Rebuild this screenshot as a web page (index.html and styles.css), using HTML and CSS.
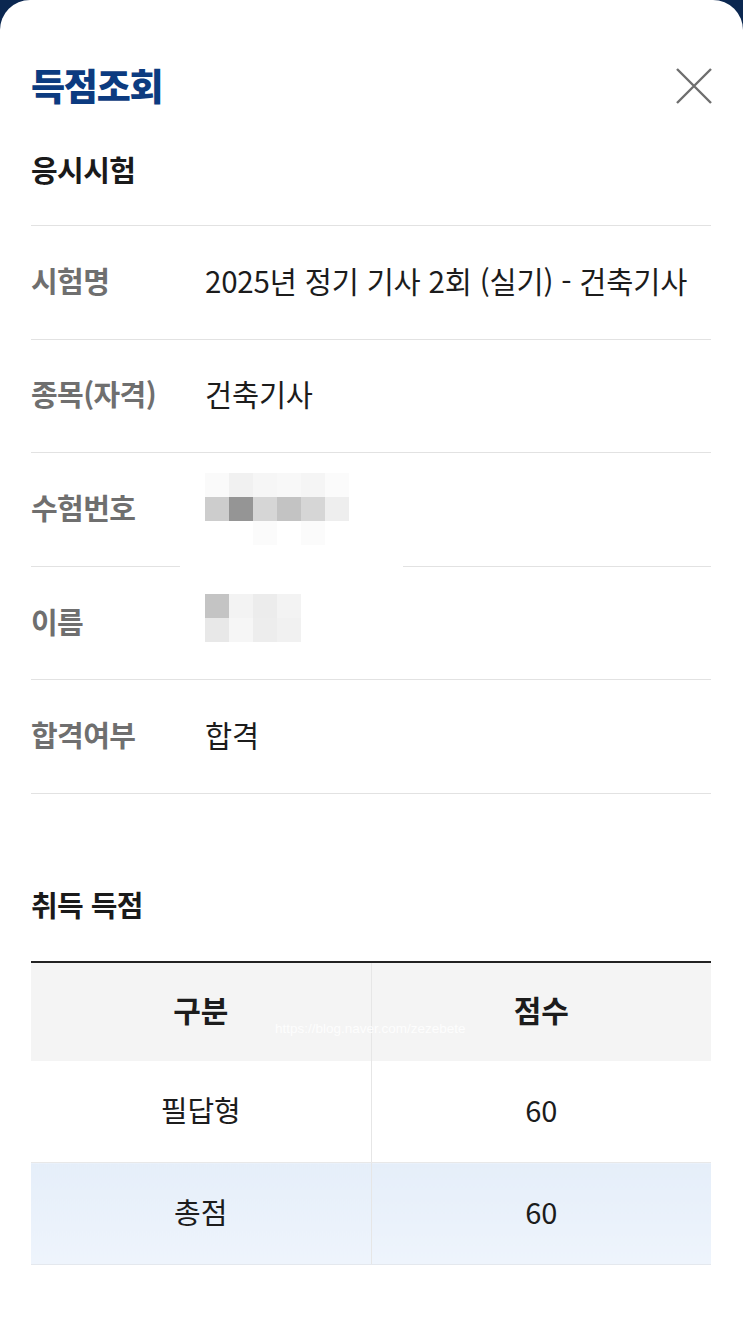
FILE: index.html
```html
<!DOCTYPE html>
<html lang="ko">
<head>
<meta charset="utf-8">
<title>득점조회</title>
<link rel="stylesheet" href="styles.css">
</head>
<body>
<div class="sheet">
  <div class="head">
    <h1 class="title">득점조회</h1>
    <button class="close" aria-label="닫기">
      <svg width="36" height="36" viewBox="0 0 36 36"><path d="M1 1 L35 35 M35 1 L1 35" stroke="#6e6e6e" stroke-width="2.4" fill="none"/></svg>
    </button>
  </div>

  <h2 class="sec-title first">응시시험</h2>
  <div class="info">
    <div class="row"><div class="label">시험명</div><div class="value">2025년 정기 기사 2회 (실기) - 건축기사</div></div>
    <div class="row"><div class="label">종목(자격)</div><div class="value">건축기사</div></div>
    <div class="row">
      <div class="label">수험번호</div>
      <div class="value">
        <div class="mosaic m6">
          <i style="background:#fafafa"></i><i style="background:#f1f1f1"></i><i style="background:#f6f6f6"></i><i style="background:#f8f8f8"></i><i style="background:#f5f5f5"></i><i style="background:#fbfbfb"></i>
          <i style="background:#cdcdcd"></i><i style="background:#959595"></i><i style="background:#d6d6d6"></i><i style="background:#c3c3c3"></i><i style="background:#d6d6d6"></i><i style="background:#eeeeee"></i>
          <i style="background:#fff"></i><i style="background:#fff"></i><i style="background:#fbfbfb"></i><i style="background:#fff"></i><i style="background:#fbfbfb"></i><i style="background:#fff"></i>
        </div>
      </div>
      <span class="gap"></span>
    </div>
    <div class="row">
      <div class="label">이름</div>
      <div class="value">
        <div class="mosaic m4 up">
          <i style="background:#c4c4c4"></i><i style="background:#f3f3f3"></i><i style="background:#ececec"></i><i style="background:#f3f3f3"></i>
          <i style="background:#e8e8e8"></i><i style="background:#f6f6f6"></i><i style="background:#ededed"></i><i style="background:#f1f1f1"></i>
        </div>
      </div>
    </div>
    <div class="row"><div class="label">합격여부</div><div class="value">합격</div></div>
  </div>

  <h2 class="sec-title second">취득 득점</h2>
  <div class="table-wrap">
    <table class="score">
      <thead>
        <tr><th>구분</th><th>점수</th></tr>
      </thead>
      <tbody>
        <tr><td>필답형</td><td>60</td></tr>
        <tr class="total"><td>총점</td><td>60</td></tr>
      </tbody>
    </table>
    <span class="watermark">https://blog.naver.com/zezebete</span>
  </div>
</div>
</body>
</html>
```

FILE: styles.css
```css
* { box-sizing: border-box; }
html, body { margin: 0; padding: 0; }
body {
  background: #0b2750;
  font-family: "Noto Sans CJK KR", "Noto Sans", sans-serif;
  color: #1c1c1c;
}
.sheet {
  background: #fff;
  border-radius: 30px 30px 0 0;
  min-height: 1319px;
  padding: 1px 32px 0 31px;
}
.head {
  margin-top: 55px;
  height: 60px;
  display: flex;
  align-items: center;
  justify-content: space-between;
}
.title {
  margin: 0 0 2px;
  font-size: 37px;
  font-weight: 900;
  color: #0c3b80;
  letter-spacing: -1.2px;
  line-height: 1;
}
.close {
  border: 0;
  background: none;
  padding: 0;
  width: 36px;
  height: 36px;
  margin-right: -1px;
  display: flex;
}
.sec-title {
  margin: 0;
  height: 56px;
  padding-bottom: 6px;
  display: flex;
  align-items: center;
  font-size: 29px;
  font-weight: 700;
  color: #1a1a1a;
  letter-spacing: -0.6px;
}
.sec-title.first { margin-top: 28px; margin-bottom: 25px; }
.sec-title.second { margin-top: 85px; margin-bottom: 26px; }
.info { border-top: 1px solid #e2e2e2; }
.row {
  position: relative;
  height: 113.6px;
  padding-bottom: 5px;
  border-bottom: 1px solid #e2e2e2;
  display: flex;
  align-items: center;
}
.label {
  width: 174px;
  font-size: 29px;
  font-weight: 700;
  color: #6f6f6f;
  letter-spacing: -0.6px;
}
.value {
  font-size: 29.5px;
  font-weight: 400;
  color: #1c1c1c;
  letter-spacing: -0.2px;
}
.mosaic { display: grid; grid-auto-rows: 24px; margin-top: 5px; }
.mosaic i { display: block; width: 24px; height: 24px; }
.m6 { grid-template-columns: repeat(6, 24px); }
.m4 { grid-template-columns: repeat(4, 24px); }
.mosaic.up { margin-top: 0; margin-bottom: 5px; }
.gap {
  position: absolute;
  left: 149px;
  bottom: -1px;
  width: 223px;
  height: 1px;
  background: #fff;
}
.table-wrap { position: relative; }
.score {
  width: 100%;
  border-collapse: collapse;
  table-layout: fixed;
  border-top: 2px solid #222;
}
.score th, .score td {
  text-align: center;
  color: #1c1c1c;
  padding: 0 0 6px;
}
.score th {
  height: 99px;
  background: #f4f4f4;
  font-weight: 700;
  font-size: 30px;
}
.score td {
  height: 102px;
  font-weight: 400;
  font-size: 29px;
  border-bottom: 1px solid #e8e8e8;
}
.score th + th, .score td + td { border-left: 1px solid #e6e6e6; }
.score tr.total td {
  background: linear-gradient(#e5eef9, #eef4fc);
  border-bottom-color: #e4e8ee;
}
.watermark {
  position: absolute;
  left: 244px;
  top: 60px;
  font-family: "Liberation Sans", sans-serif;
  font-size: 13.5px;
  color: rgba(255,255,255,0.85);
  white-space: nowrap;
}
```
